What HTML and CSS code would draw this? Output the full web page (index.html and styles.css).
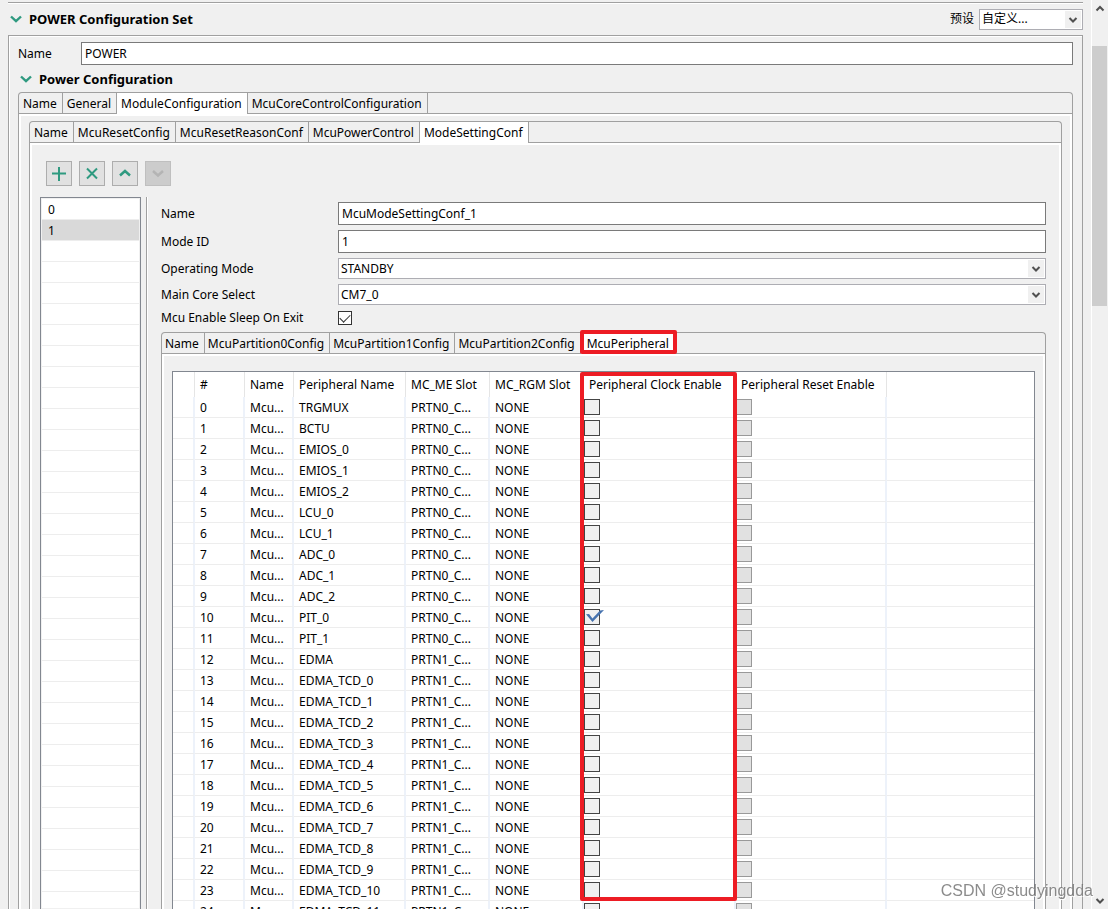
FILE: index.html
```html
<!DOCTYPE html>
<html lang="zh-CN">
<head>
<meta charset="utf-8">
<title>POWER Configuration Set</title>
<link rel="stylesheet" href="styles.css">
</head>
<body>
<div class="window">
  <main class="editor">
    <header class="section-head">
      <h1 class="title"><svg class="twisty" viewBox="0 0 12 8"><path d="M1 1.5 6 6.2 11 1.5"/></svg>POWER Configuration Set</h1>
      <label for="preset">预设</label>
      <div class="combo preset">
        <select id="preset"><option>自定义...</option></select>
        <svg class="arrow" viewBox="0 0 16 17"><path d="M4.5 7 8 10.5 11.5 7"/></svg>
      </div>
    </header>

    <section class="group">
      <div class="name-row">
        <label for="set-name">Name</label>
        <input class="field" id="set-name" type="text" value="POWER">
      </div>
      <h2 class="title sub"><svg class="twisty" viewBox="0 0 12 8"><path d="M1 1.5 6 6.2 11 1.5"/></svg>Power Configuration</h2>

      <div class="tabbox">
        <div class="tabs" role="tablist">
          <button class="tab" role="tab">Name</button>
          <button class="tab" role="tab">General</button>
          <button class="tab active" role="tab" aria-selected="true">ModuleConfiguration</button>
          <button class="tab" role="tab">McuCoreControlConfiguration</button>
        </div>
        <div class="panel outer">
          <div class="tabbox">
            <div class="tabs" role="tablist">
              <button class="tab" role="tab">Name</button>
              <button class="tab" role="tab">McuResetConfig</button>
              <button class="tab" role="tab">McuResetReasonConf</button>
              <button class="tab" role="tab">McuPowerControl</button>
              <button class="tab active" role="tab" aria-selected="true">ModeSettingConf</button>
            </div>
            <div class="panel modes">
              <div class="toolbar">
                <button class="tool" aria-label="Add"><svg viewBox="0 0 24 23"><path d="M12 5v14M5 11.5h14"/></svg></button>
                <button class="tool" aria-label="Remove"><svg viewBox="0 0 24 23"><path d="M7 6.5l10 10M17 6.5l-10 10"/></svg></button>
                <button class="tool" aria-label="Move up"><svg viewBox="0 0 24 23"><path class="bold" d="M7 13.5l5-4.5 5 4.5"/></svg></button>
                <button class="tool" aria-label="Move down" disabled><svg viewBox="0 0 24 23"><path class="bold" d="M7 9l5 4.5L17 9"/></svg></button>
              </div>
              <div class="split">
                <ul class="list">
                  <li>0</li>
                  <li class="selected">1</li>
                </ul>
                <div class="detail">
                  <div class="form">
                    <label for="mode-name">Name</label>
                    <input class="field" id="mode-name" type="text" value="McuModeSettingConf_1">
                    <label for="mode-id">Mode ID</label>
                    <input class="field" id="mode-id" type="text" value="1">
                    <label for="op-mode">Operating Mode</label>
                    <div class="combo">
                      <select id="op-mode"><option>STANDBY</option></select>
                      <svg class="arrow" viewBox="0 0 16 17"><path d="M4.5 7 8 10.5 11.5 7"/></svg>
                    </div>
                    <label for="main-core">Main Core Select</label>
                    <div class="combo">
                      <select id="main-core"><option>CM7_0</option></select>
                      <svg class="arrow" viewBox="0 0 16 17"><path d="M4.5 7 8 10.5 11.5 7"/></svg>
                    </div>
                    <label for="sleep">Mcu Enable Sleep On Exit</label>
                    <input class="check" id="sleep" type="checkbox" checked>
                  </div>
                  <div class="tabbox">
                    <div class="tabs compact" role="tablist">
                      <button class="tab" role="tab">Name</button>
                      <button class="tab" role="tab">McuPartition0Config</button>
                      <button class="tab" role="tab">McuPartition1Config</button>
                      <button class="tab" role="tab">McuPartition2Config</button>
                      <button class="tab active marked" role="tab" aria-selected="true">McuPeripheral</button>
                    </div>
                    <div class="panel grid-panel">
                      <div class="table-wrap">
                        <table>
                          <colgroup>
                            <col class="c-gutter"><col class="c-num"><col class="c-name"><col class="c-periph"><col class="c-me"><col class="c-rgm"><col class="c-clock"><col class="c-reset"><col>
                          </colgroup>
                          <thead>
                            <tr><th></th><th>#</th><th>Name</th><th>Peripheral Name</th><th>MC_ME Slot</th><th>MC_RGM Slot</th><th class="outlined">Peripheral Clock Enable</th><th>Peripheral Reset Enable</th><th></th></tr>
                          </thead>
                          <tbody id="rows"></tbody>
                        </table>
                      </div>
                    </div>
                  </div>
                </div>
              </div>
            </div>
          </div>
        </div>
      </div>
    </section>
  </main>
  <div class="scrollbar" aria-hidden="true">
    <svg viewBox="0 0 16 17"><path d="M4.5 10.5 8 7l3.5 3.5"/></svg>
    <div class="track"><div class="thumb"></div></div>
    <svg viewBox="0 0 16 17"><path d="M4.5 7 8 10.5 11.5 7"/></svg>
  </div>
</div>
<div class="watermark">CSDN @studyingdda</div>
<script src="app.js"></script>
</body>
</html>
```
FILE: styles.css
```css
*, ::before, ::after { box-sizing: border-box; }

body {
  margin: 0;
  height: 100vh;
  overflow: hidden;
  background: #f0f0f0;
  color: #000;
  font: 12px/16px "Noto Sans", "Noto Sans CJK SC", sans-serif;
}

button, input, select { font: inherit; color: inherit; margin: 0; }

.window { display: flex; height: 100vh; }

.editor {
  flex: 1;
  min-width: 0;
  display: flex;
  flex-direction: column;
  padding: 2px 8px 0;
}

.section-head {
  display: flex;
  align-items: center;
  gap: 5px;
  height: 33px;
  border-top: 1px solid #a0a0a0;
  box-shadow: inset 0 1px #fff;
}

.title {
  display: flex;
  align-items: center;
  gap: 7px;
  flex: 1;
  margin: 0;
  padding-left: 2px;
  font-size: 13px;
  font-weight: 700;
}

.twisty { width: 12px; height: 8px; fill: none; stroke: #2f9a80; stroke-width: 2.4; }

.combo { position: relative; height: 21px; }
.combo select {
  display: block;
  width: 100%;
  height: 100%;
  padding: 0 20px 0 2px;
  border: 1px solid #adadb3;
  border-radius: 0;
  background: #fff;
  appearance: none;
}
.preset { width: 104px; }

.arrow {
  position: absolute;
  top: 2px;
  right: 2px;
  width: 16px;
  height: 17px;
  background: #f0f0f0;
  fill: none;
  stroke: #505050;
  stroke-width: 2;
  pointer-events: none;
}

.group {
  flex: 1;
  min-height: 0;
  display: flex;
  flex-direction: column;
  padding: 6px 9px 0;
  border: 1px solid #a0a0a0;
  border-bottom: 0;
  box-shadow: inset 1px 1px #fff;
}

.name-row { display: flex; align-items: center; }
.name-row label { width: 63px; }
.name-row .field { flex: 1; }

.field {
  height: 23px;
  min-width: 0;
  padding: 0 3px;
  border: 1px solid #7a7a7a;
  border-radius: 0;
  background: #fff;
}

.title.sub { flex: none; height: 27px; }

.tabbox {
  flex: 1;
  min-height: 0;
  display: flex;
  flex-direction: column;
  border: 1px solid #a0a0a0;
  border-bottom: 0;
  border-radius: 4px 4px 0 0;
}

.tabs { display: flex; height: 21px; border-bottom: 1px solid #a0a0a0; }

.tab {
  position: relative;
  height: 20px;
  padding: 2px 5px 0 4px;
  border: 0;
  border-right: 1px solid #a0a0a0;
  background: transparent;
  white-space: nowrap;
}
.compact .tab { padding: 2px 5px 0 3px; }
.tab.active { height: 21px; padding-top: 1px; background: #fff; }
.compact .marked { padding-left: 6px; }
.marked::after {
  content: "";
  position: absolute;
  inset: -3px -3px 0 -1px;
  border: 4px solid #ed1c24;
  border-radius: 2px;
}

.panel {
  flex: 1;
  min-height: 0;
  display: flex;
  flex-direction: column;
  border: 2px solid #fff;
  border-bottom: 0;
}
.outer { padding: 5px 8px 0; }
.modes { padding: 16px 13px 0 8px; }
.grid-panel { padding: 15px 8px 0; }

.toolbar { display: flex; gap: 7px; padding-left: 6px; margin-bottom: 11px; }

.tool {
  width: 26px;
  height: 25px;
  padding: 0;
  border: 1px solid #adadad;
  background: #e1e1e1;
}
.tool svg { display: block; width: 24px; height: 23px; fill: none; stroke: #2f9a80; stroke-width: 2; }
.tool .bold { stroke-width: 2.5; }
.tool:disabled { border-color: #bfbfbf; background: #ccc; }
.tool:disabled svg { stroke: #b4b4b4; }

.split { flex: 1; min-height: 0; display: flex; }

.list {
  width: 101px;
  margin: 0 5px 0 0;
  padding: 1px;
  list-style: none;
  border: 1px solid #828790;
  border-bottom: 0;
  background: #fff repeating-linear-gradient(transparent 0 20px, #ededed 20px 21px) content-box;
}
.list li { height: 21px; padding: 3px 6px 0; border-bottom: 1px solid #ededed; }
.list .selected { background: #d9d9d9; }

.detail {
  flex: 1;
  min-width: 0;
  display: flex;
  flex-direction: column;
  padding: 5px 0 0 14px;
  border-left: 1px solid #a0a0a0;
  box-shadow: inset 1px 0 #fff;
}

.form {
  display: grid;
  grid-template-columns: 177px 1fr;
  row-gap: 5px;
  align-items: center;
  margin-bottom: 6px;
}

.check {
  position: relative;
  display: block;
  width: 14px;
  height: 14px;
  border: 1px solid #333;
  background: #fff;
  appearance: none;
}
.check::before {
  content: "";
  position: absolute;
  left: 1px;
  top: 2px;
  width: 10px;
  height: 6px;
  border: solid #333;
  border-width: 0 0 1px 1px;
  transform: rotate(-45deg);
}

.table-wrap {
  flex: 1;
  min-height: 0;
  overflow: hidden;
  border: 1px solid #828790;
  border-bottom: 0;
  background: #fff;
}

table { width: 100%; table-layout: fixed; border-collapse: separate; border-spacing: 0; }
.c-gutter { width: 22px; }
.c-num { width: 50px; }
.c-name { width: 49px; }
.c-periph { width: 112px; }
.c-me { width: 84px; }
.c-rgm { width: 94px; }
.c-clock { width: 152px; }
.c-reset { width: 151px; }

th, td { padding: 0 0 0 5px; text-align: left; white-space: nowrap; font-weight: 400; }
th { position: relative; height: 25px; border-right: 1px solid #e5e5e5; }
td { height: 21px; padding-top: 2px; border-right: 2px solid #edf2fa; border-bottom: 1px solid #ededed; }
th:last-child, td:last-child { border-right: 0; }
td.box { padding: 0; }

.outlined::after {
  content: "";
  position: absolute;
  z-index: 1;
  left: -4px;
  top: 0;
  width: 157px;
  height: 529px;
  border: 4px solid #ed1c24;
  border-radius: 2px;
  pointer-events: none;
}

.cell-check {
  position: relative;
  display: block;
  width: 16px;
  height: 16px;
  border: 1px solid #444;
  background: #f0f0f0;
  appearance: none;
}
.cell-check:disabled { border-color: #999; background: #e1e1e1; }
.cell-check:checked { z-index: 2; }
.cell-check:checked::before {
  content: "";
  position: absolute;
  left: 1px;
  top: 0;
  width: 18px;
  height: 12px;
  background: #4672ae;
  clip-path: polygon(0 35%, 17% 33%, 36% 70%, 78% 5%, 100% 0, 36% 100%);
}

.scrollbar {
  width: 17px;
  display: flex;
  flex-direction: column;
  border-left: 1px solid #fff;
  background: #f0f0f0;
}
.scrollbar svg { width: 16px; height: 17px; fill: none; stroke: #505050; stroke-width: 2; }
.track { flex: 1; padding-top: 29px; }
.thumb { width: 15px; height: 260px; background: #cdcdcd; }

.watermark {
  position: fixed;
  z-index: 3;
  right: 15px;
  bottom: 8px;
  color: rgba(110, 110, 110, 0.8);
  font: 16px/20px "Liberation Sans", sans-serif;
  text-shadow: 1px 1px #fff;
}
```
FILE: app.js
```js
const peripherals = ["TRGMUX", "BCTU", "EMIOS_0", "EMIOS_1", "EMIOS_2", "LCU_0", "LCU_1",
  "ADC_0", "ADC_1", "ADC_2", "PIT_0", "PIT_1", "EDMA"];
for (let n = 0; n < 12; n++) peripherals.push("EDMA_TCD_" + n);

document.getElementById("rows").innerHTML = peripherals.map((name, i) => `
  <tr>
    <td></td><td>${i}</td><td>Mcu...</td><td>${name}</td>
    <td>PRTN${i < 12 ? 0 : 1}_C...</td><td>NONE</td>
    <td class="box"><input class="cell-check" type="checkbox" aria-label="${name} clock enable"${name === "PIT_0" ? " checked" : ""}></td>
    <td class="box"><input class="cell-check" type="checkbox" aria-label="${name} reset enable" disabled></td>
    <td></td>
  </tr>`).join("");
```
